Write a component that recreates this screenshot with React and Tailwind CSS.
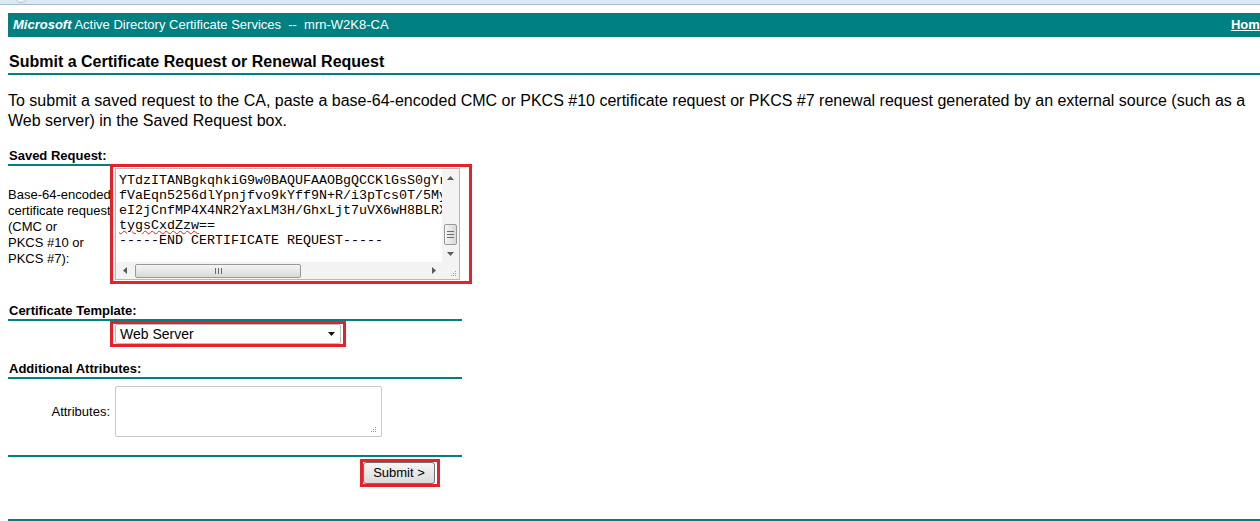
const TEAL = "border-[#008080]";

function ArrowUp() {
  return (
    <svg width="7" height="4" viewBox="0 0 7 4"><path d="M0 4 L3.5 0 L7 4 Z" fill="#5a5a5a" /></svg>
  );
}
function ArrowDown() {
  return (
    <svg width="7" height="4" viewBox="0 0 7 4"><path d="M0 0 L3.5 4 L7 0 Z" fill="#5a5a5a" /></svg>
  );
}
function ArrowLeft() {
  return (
    <svg width="4" height="7" viewBox="0 0 4 7"><path d="M4 0 L0 3.5 L4 7 Z" fill="#5a5a5a" /></svg>
  );
}
function ArrowRight() {
  return (
    <svg width="4" height="7" viewBox="0 0 4 7"><path d="M0 0 L4 3.5 L0 7 Z" fill="#5a5a5a" /></svg>
  );
}
function Grip() {
  return (
    <svg width="8" height="8" viewBox="0 0 8 8">
      <rect x="6" y="2" width="1" height="1" fill="#9a9a9a" />
      <rect x="4" y="4" width="1" height="1" fill="#9a9a9a" />
      <rect x="6" y="4" width="1" height="1" fill="#9a9a9a" />
      <rect x="2" y="6" width="1" height="1" fill="#9a9a9a" />
      <rect x="4" y="6" width="1" height="1" fill="#9a9a9a" />
      <rect x="6" y="6" width="1" height="1" fill="#9a9a9a" />
    </svg>
  );
}

export default function App() {
  return (
    <div className="w-[1260px] h-[521px] overflow-hidden bg-white text-black font-['Liberation_Sans',Arial,sans-serif]">
      {/* browser chrome strip */}
      <div className="h-[5px] bg-[#dde8f5] border-b border-[#a9b9cb] relative overflow-hidden">
        <div className="absolute left-[14px] top-[-11px] w-[14px] h-[14px] rounded-full border border-[#b7c3d0] bg-[#eef2f8]" />
      </div>

      {/* header bar */}
      <div className="mt-[8px] ml-[8px] h-[24px] bg-[#008080] flex items-center justify-between pl-[5px] text-white text-[13px] overflow-hidden whitespace-pre">
        <span>
          <b><i>Microsoft</i></b> Active Directory Certificate Services  --  mrn-W2K8-CA
        </span>
        <span className="underline font-bold mr-[-7px]">Home</span>
      </div>

      {/* heading */}
      <div className={`ml-[8px] mt-[16px] border-b-2 ${TEAL} pb-[2px] pl-[1px] text-[16px] leading-[18px] font-bold`}>
        Submit a Certificate Request or Renewal Request
      </div>

      {/* intro paragraph */}
      <p className="ml-[8px] mt-[16px] pr-[8px] text-[16px] leading-[20px]">
        To submit a saved request to the CA, paste a base-64-encoded CMC or PKCS #10 certificate request or PKCS #7 renewal request generated by an external source (such as a Web server) in the Saved Request box.
      </p>

      {/* form */}
      <div className="ml-[8px] w-[454px]">
        {/* Saved request */}
        <div className="mt-[17px] flex items-start">
          <div className="w-[102px] shrink-0">
            <div className={`text-[13px] leading-[16px] font-bold pl-[1px] border-b-2 ${TEAL} whitespace-nowrap`}>
              Saved Request:
            </div>
            <div className="mt-[21px] text-[13px] leading-[16px] whitespace-nowrap">
              Base-64-encoded<br />certificate request<br />(CMC or<br />PKCS #10 or<br />PKCS #7):
            </div>
          </div>
          <div className="relative mt-[16px] w-[362px] h-[120px] border-[3px] border-[#e8202a] bg-white shrink-0">
            <div className="ml-[2px] mt-[1px] w-[345px] h-[112px] border border-[#b9b9b9] grid grid-cols-[1fr_17px] grid-rows-[1fr_17px] overflow-hidden">
              <div className="overflow-hidden pl-[3px] pt-[4px] font-['Liberation_Mono','Courier_New',monospace] text-[13.33px] leading-[15px] whitespace-pre">
                <div>YTdzITANBgkqhkiG9w0BAQUFAAOBgQCCKlGsS0gYrR5mQ</div>
                <div>fVaEqn5256dlYpnjfvo9kYff9N+R/i3pTcs0T/5MyQ2k</div>
                <div>eI2jCnfMP4X4NR2YaxLM3H/GhxLjt7uVX6wH8BLRX1a</div>
                <div>
                  <span className="underline decoration-wavy decoration-[#e02020] decoration-1 underline-offset-[1px]">tygsCxdZzw</span>==
                </div>
                <div>-----END CERTIFICATE REQUEST-----</div>
              </div>
              {/* vertical scrollbar */}
              <div className="bg-[#f3f3f3] flex flex-col">
                <div className="h-[17px] flex items-center justify-center"><ArrowUp /></div>
                <div className="flex-1 flex flex-col justify-end items-center">
                  <div className="w-[13px] h-[21px] rounded-[2px] border border-[#989898] bg-linear-to-r from-[#f5f5f5] to-[#d9d9d9] flex flex-col items-center justify-center gap-[2px]">
                    <div className="w-[7px] h-px bg-[#6b6b6b]" />
                    <div className="w-[7px] h-px bg-[#6b6b6b]" />
                    <div className="w-[7px] h-px bg-[#6b6b6b]" />
                  </div>
                </div>
                <div className="h-[17px] flex items-center justify-center"><ArrowDown /></div>
              </div>
              {/* horizontal scrollbar */}
              <div className="bg-[#f3f3f3] flex items-center">
                <div className="w-[17px] h-full flex items-center justify-center"><ArrowLeft /></div>
                <div className="flex-1 h-full flex items-center pl-[2px]">
                  <div className="w-[166px] h-[14px] rounded-[2px] border border-[#989898] bg-linear-to-b from-[#f5f5f5] to-[#d9d9d9] flex items-center justify-center gap-[2px]">
                    <div className="w-px h-[6px] bg-[#6b6b6b]" />
                    <div className="w-px h-[6px] bg-[#6b6b6b]" />
                    <div className="w-px h-[6px] bg-[#6b6b6b]" />
                  </div>
                </div>
                <div className="w-[17px] h-full flex items-center justify-center"><ArrowRight /></div>
              </div>
              <div className="bg-[#f3f3f3] flex items-end justify-end pr-[2px] pb-[2px]"><Grip /></div>
            </div>
          </div>
        </div>

        {/* Certificate template */}
        <div className={`mt-[19px] text-[13px] leading-[16px] font-bold pl-[1px] border-b-2 ${TEAL}`}>
          Certificate Template:
        </div>
        <div className="ml-[102px] w-[236px] h-[26px] border-[3px] border-[#e8202a] px-[2px]">
          <div className="h-[20px] border border-[#bdbdbd] rounded-[2px] flex items-center justify-between pl-[4px] pr-[5px] text-[14px] bg-white">
            <span>Web Server</span>
            <svg width="7" height="4" viewBox="0 0 7 4"><path d="M0 0 L7 0 L3.5 4 Z" fill="#111" /></svg>
          </div>
        </div>

        {/* Additional attributes */}
        <div className={`mt-[14px] text-[13px] leading-[16px] font-bold pl-[1px] border-b-2 ${TEAL}`}>
          Additional Attributes:
        </div>
        <div className="mt-[7px] flex items-center">
          <div className="w-[102px] text-right text-[13px] leading-[16px]">Attributes:</div>
          <div className="ml-[5px] w-[267px] h-[51px] border border-[#c8c8c8] rounded-[2px] flex items-end justify-end pr-[4px] pb-[3px]">
            <Grip />
          </div>
        </div>

        <div className="mt-[18px] h-[2px] bg-[#008080]" />

        <div className="mt-[2px] ml-[352px] w-[80px] h-[28px] border-[3px] border-[#e8202a] flex items-center">
          <div className="w-[72px] h-[22px] border border-[#707070] rounded-[3px] bg-linear-to-b from-[#f6f6f6] to-[#dadada] flex items-center justify-center text-[13px]">
            Submit &gt;
          </div>
        </div>
      </div>

      <div className="ml-[8px] mt-[32px] h-[2px] bg-[#008080]" />
    </div>
  );
}
